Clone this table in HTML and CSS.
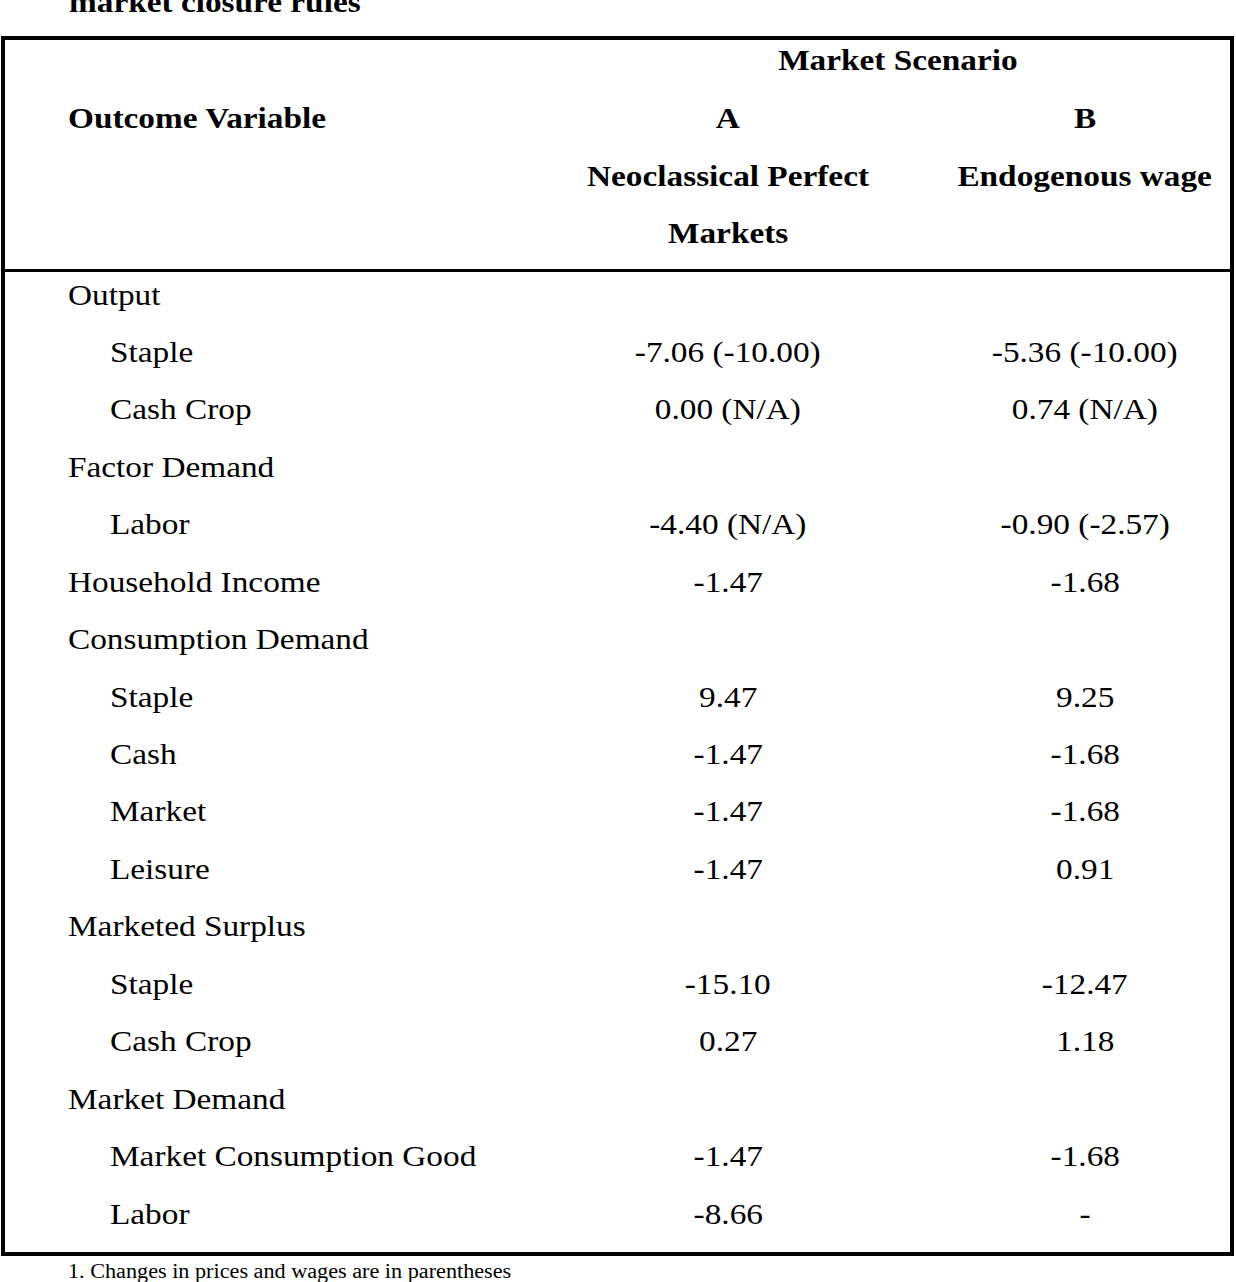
FILE: index.html
```html
<!DOCTYPE html>
<html>
<head>
<meta charset="utf-8">
<link rel="stylesheet" href="styles.css">
</head>
<body>
<div class="title"><span class="s">market closure rules</span></div>
<div class="table">
  <div class="head">
    <div class="hrow first">
      <div></div>
      <div class="c span2 scen"><span class="s">Market Scenario</span></div>
    </div>
    <div class="hrow">
      <div class="lab"><span class="s">Outcome Variable</span></div>
      <div class="c"><span class="s">A</span></div>
      <div class="c"><span class="s">B</span></div>
    </div>
    <div class="hrow">
      <div></div>
      <div class="c"><span class="s">Neoclassical Perfect</span></div>
      <div class="c"><span class="s">Endogenous wage</span></div>
    </div>
    <div class="hrow">
      <div></div>
      <div class="c"><span class="s">Markets</span></div>
      <div></div>
    </div>
  </div>
  <div class="body">
    <div class="row"><div class="lab"><span class="s">Output</span></div><div></div><div></div></div>
    <div class="row"><div class="lab sub"><span class="s">Staple</span></div><div class="c"><span class="s">-7.06 (-10.00)</span></div><div class="c"><span class="s">-5.36 (-10.00)</span></div></div>
    <div class="row"><div class="lab sub"><span class="s">Cash Crop</span></div><div class="c"><span class="s">0.00 (N/A)</span></div><div class="c"><span class="s">0.74 (N/A)</span></div></div>
    <div class="row"><div class="lab"><span class="s">Factor Demand</span></div><div></div><div></div></div>
    <div class="row"><div class="lab sub"><span class="s">Labor</span></div><div class="c"><span class="s">-4.40 (N/A)</span></div><div class="c"><span class="s">-0.90 (-2.57)</span></div></div>
    <div class="row"><div class="lab"><span class="s">Household Income</span></div><div class="c"><span class="s">-1.47</span></div><div class="c"><span class="s">-1.68</span></div></div>
    <div class="row"><div class="lab"><span class="s">Consumption Demand</span></div><div></div><div></div></div>
    <div class="row"><div class="lab sub"><span class="s">Staple</span></div><div class="c"><span class="s">9.47</span></div><div class="c"><span class="s">9.25</span></div></div>
    <div class="row"><div class="lab sub"><span class="s">Cash</span></div><div class="c"><span class="s">-1.47</span></div><div class="c"><span class="s">-1.68</span></div></div>
    <div class="row"><div class="lab sub"><span class="s">Market</span></div><div class="c"><span class="s">-1.47</span></div><div class="c"><span class="s">-1.68</span></div></div>
    <div class="row"><div class="lab sub"><span class="s">Leisure</span></div><div class="c"><span class="s">-1.47</span></div><div class="c"><span class="s">0.91</span></div></div>
    <div class="row"><div class="lab"><span class="s">Marketed Surplus</span></div><div></div><div></div></div>
    <div class="row"><div class="lab sub"><span class="s">Staple</span></div><div class="c"><span class="s">-15.10</span></div><div class="c"><span class="s">-12.47</span></div></div>
    <div class="row"><div class="lab sub"><span class="s">Cash Crop</span></div><div class="c"><span class="s">0.27</span></div><div class="c"><span class="s">1.18</span></div></div>
    <div class="row"><div class="lab"><span class="s">Market Demand</span></div><div></div><div></div></div>
    <div class="row"><div class="lab sub"><span class="s">Market Consumption Good</span></div><div class="c"><span class="s">-1.47</span></div><div class="c"><span class="s">-1.68</span></div></div>
    <div class="row"><div class="lab sub"><span class="s">Labor</span></div><div class="c"><span class="s">-8.66</span></div><div class="c"><span class="s">-</span></div></div>
  </div>
</div>
<div class="note"><span class="s">1. Changes in prices and wages are in parentheses</span></div>
</body>
</html>
```

FILE: styles.css
```css
html, body {
  margin: 0;
  padding: 0;
  background: #ffffff;
  color: #000000;
  font-family: "Liberation Serif", "Times New Roman", serif;
  overflow: hidden;
}

.s {
  display: inline-block;
  transform: scaleX(1.11);
  transform-origin: left center;
  white-space: nowrap;
}

.title {
  font-weight: bold;
  font-size: 30px;
  line-height: 30px;
  height: 30px;
  margin-top: -13px;
  margin-bottom: 19px;
  padding-left: 69px;
}

.table {
  margin-left: 1px;
  width: 1225px;
  border: 4px solid #000;
  font-size: 30px;
}

.head {
  font-weight: bold;
  border-bottom: 3px solid #000;
  padding-bottom: 7px;
}

.hrow, .row {
  display: grid;
  grid-template-columns: 511px 424px 1fr;
}

.hrow {
  line-height: 57.5px;
}

.hrow.first {
  line-height: 40px;
  margin-bottom: 9px;
}

.span2 {
  grid-column: 2 / span 2;
}

.scen {
  padding-left: 50px;
}

.body {
  display: flex;
  flex-direction: column;
  gap: 11.44px;
  padding-top: 0px;
  padding-bottom: 15px;
}

.row {
  line-height: 46px;
}

.lab {
  padding-left: 63px;
}

.lab.sub {
  padding-left: 105px;
}

.c {
  text-align: center;
}

.c .s {
  transform-origin: center center;
}

.note {
  font-size: 20px;
  line-height: 24px;
  margin-top: 3px;
  padding-left: 68px;
}
```
